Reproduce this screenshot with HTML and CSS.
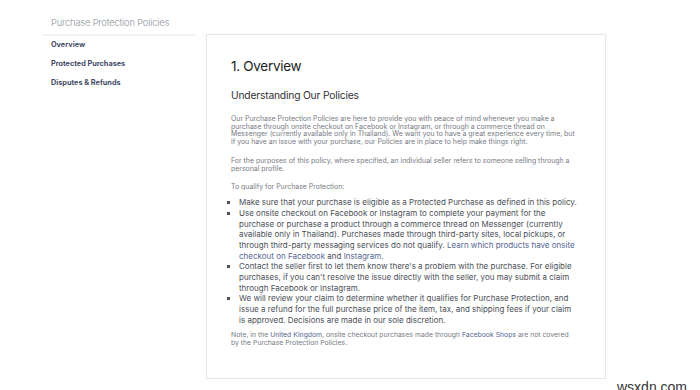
FILE: index.html
```html
<!DOCTYPE html>
<html lang="en">
<head>
    <meta charset="UTF-8">
    <meta name="viewport" content="width=device-width, initial-scale=1.0">
    <title>Purchase Protection Policies</title>
    <link rel="stylesheet" href="styles.css">
</head>
<body>
    <div class="page">
        <div class="sidebar">
            <div class="side-title">Purchase Protection Policies</div>
            <nav class="side-nav">
                <a href="#overview">Overview</a>
                <a href="#protected">Protected Purchases</a>
                <a href="#disputes">Disputes &amp; Refunds</a>
            </nav>
        </div>

        <div class="card" id="overview">
            <h1>1. Overview</h1>
            <h2>Understanding Our Policies</h2>

            <p>Our Purchase Protection Policies are here to provide you with peace of mind whenever you make a purchase through onsite checkout on Facebook or Instagram, or through a commerce thread on Messenger (currently available only in Thailand). We want you to have a great experience every time, but if you have an issue with your purchase, our Policies are in place to help make things right.</p>

            <p>For the purposes of this policy, where specified, an individual seller refers to someone selling through a personal profile.</p>

            <p class="lead">To qualify for Purchase Protection:</p>

            <ul class="rules">
                <li>Make sure that your purchase is eligible as a Protected Purchase as defined in this policy.</li>
                <li>Use onsite checkout on Facebook or Instagram to complete your payment for the purchase or purchase a product through a commerce thread on Messenger (currently available only in Thailand). Purchases made through third-party sites, local pickups, or through third-party messaging services do not qualify. <a href="#">Learn which products have onsite checkout on Facebook</a> and <a href="#">Instagram</a>.</li>
                <li>Contact the seller first to let them know there's a problem with the purchase. For eligible purchases, if you can't resolve the issue directly with the seller, you may submit a claim through Facebook or Instagram.</li>
                <li>We will review your claim to determine whether it qualifies for Purchase Protection, and issue a refund for the full purchase price of the item, tax, and shipping fees if your claim is approved. Decisions are made in our sole discretion.</li>
            </ul>

            <p class="note">Note, in the <a href="#">United Kingdom</a>, onsite checkout purchases made through <a href="#">Facebook Shops</a> are not covered by the Purchase Protection Policies.</p>
        </div>
    </div>

    <div class="watermark">wsxdn.com</div>
</body>
</html>
```

FILE: styles.css
```css
body {
    font-family: Inter, "Liberation Sans", sans-serif;
    background-color: #fff;
    color: #1c1e21;
    margin: 0;
}

.page {
    display: flex;
    align-items: flex-start;
    gap: 11px;
    padding-left: 42px;
    padding-top: 16px;
}

.sidebar {
    width: 153px;
}

.side-title {
    font-size: 9.4px;
    font-weight: 300;
    letter-spacing: -0.2px;
    color: #8d949e;
    padding: 1px 0 0 9px;
    height: 17px;
    border-bottom: 2px solid #f2f3f5;
}

.side-nav {
    display: flex;
    flex-direction: column;
    gap: 9px;
    padding: 4px 0 0 9px;
}

.side-nav a {
    font-size: 7.3px;
    font-weight: 700;
    line-height: 10px;
    color: #444c68;
    text-decoration: none;
}

.card {
    margin-top: 18px;
    width: 347px;
    padding: 22px 27px 32px 24px;
    background: white;
    border: 1px solid #e6e7ea;
    box-shadow: 0 0 3px rgba(0, 0, 0, 0.05);
}

h1 {
    font-size: 13.5px;
    font-weight: 400;
    letter-spacing: -0.3px;
    line-height: 18px;
    margin: 0 0 13px;
}

h2 {
    font-size: 10.3px;
    font-weight: 400;
    letter-spacing: -0.2px;
    line-height: 14px;
    color: #333;
    margin: 0 0 13px;
}

p {
    font-size: 6.95px;
    line-height: 7.7px;
    color: #767b84;
    margin: 0 0 11px;
}

p.lead {
    margin-bottom: 6.5px;
}

a {
    color: #55678f;
    text-decoration: none;
}

.rules {
    list-style: square;
    margin: 0 0 5.5px;
    padding-left: 8px;
    font-size: 8px;
    line-height: 10.67px;
    color: #4b4f56;
}

.note {
    font-size: 6.85px;
    margin: 0;
}

.watermark {
    position: absolute;
    left: 617px;
    top: 379px;
    font-size: 14px;
    color: #333;
    font-family: "Liberation Sans", sans-serif;
}
```
